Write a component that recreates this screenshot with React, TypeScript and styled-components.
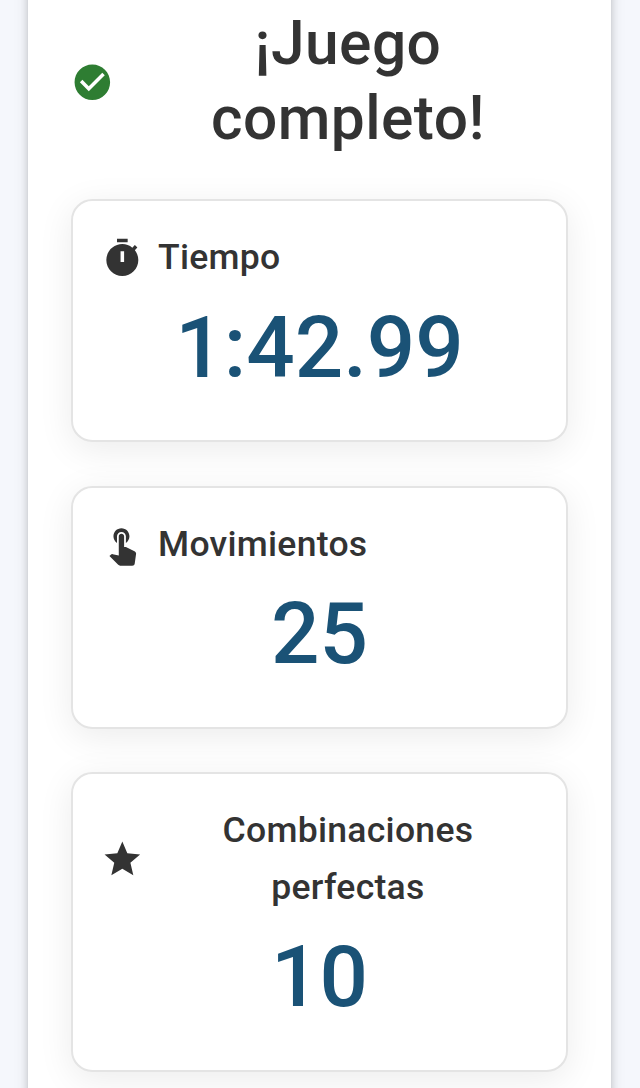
import React from "react";
import styled, { createGlobalStyle } from "styled-components";

const GlobalStyle = createGlobalStyle`
  * { box-sizing: border-box; }
  body {
    margin: 0;
    height: 1088px;
    overflow: hidden;
    background: #f5f7fc;
    font-family: Roboto, "Liberation Sans", sans-serif;
    color: #333;
  }
`;

const Page = styled.main`
  display: flow-root;
  height: 1088px;
  padding: 0 29px 0 28px;
  overflow: hidden;
`;

const Panel = styled.section`
  height: 1240px;
  margin-top: -43px;
  padding: 50.4px 43px 0;
  background: #fff;
  box-shadow: 0 5.3px 5.3px -3.6px rgba(0, 0, 0, 0.2),
    0 5.3px 7.1px 0 rgba(0, 0, 0, 0.14), 0 1.8px 14.2px 0 rgba(0, 0, 0, 0.12);
`;

const Header = styled.header`
  display: flex;
  align-items: center;
  gap: 14.2px;
  margin-bottom: 42.9px;
`;

const Title = styled.h1`
  flex: 1;
  margin: 0;
  font-size: 60.44px;
  font-weight: 500;
  line-height: 74.6px;
  letter-spacing: 0.00735em;
  text-align: center;
`;

const Icon = styled.svg<{ $color?: string }>`
  flex: none;
  width: 42.67px;
  height: 42.67px;
  fill: ${(p) => p.$color ?? "#333"};
`;

const Cards = styled.div`
  display: flex;
  flex-direction: column;
  gap: 43.7px;
`;

const Card = styled.article`
  padding: 28px 28.2px 41.8px;
  background: #fff;
  border: 2px solid #e4e4e4;
  border-radius: 21.33px;
  box-shadow: 0 7.1px 35.6px rgba(0, 0, 0, 0.08);
`;

const CardHead = styled.div`
  display: flex;
  align-items: center;
  gap: 14.2px;
  margin-bottom: 12.4px;
`;

const Label = styled.h2<{ $fill?: boolean }>`
  flex: ${(p) => (p.$fill ? 1 : "none")};
  margin: 0;
  font-size: 35.56px;
  font-weight: 500;
  line-height: 56.9px;
  letter-spacing: 0.0075em;
  text-align: center;
`;

const Value = styled.p`
  margin: 0;
  font-size: 85.33px;
  font-weight: 500;
  line-height: 99.6px;
  text-align: center;
  color: #1a5276;
`;

const CHECK =
  "M12 2C6.48 2 2 6.48 2 12s4.48 10 10 10 10-4.48 10-10S17.52 2 12 2zm-2 15-5-5 1.41-1.41L10 14.17l7.59-7.59L19 8l-9 9z";

const stats = [
  {
    label: "Tiempo",
    value: "1:42.99",
    icon: "M9 1h6v2H9zm10.03 6.39 1.42-1.42c-.43-.51-.9-.99-1.41-1.41l-1.42 1.42C16.07 4.74 14.12 4 12 4c-4.97 0-9 4.03-9 9s4.02 9 9 9 9-4.03 9-9c0-2.12-.74-4.07-1.97-5.61zM13 14h-2V8h2v6z",
  },
  {
    label: "Movimientos",
    value: "25",
    icon: "M9 11.24V7.5C9 6.12 10.12 5 11.5 5S14 6.12 14 7.5v3.74c1.21-.81 2-2.18 2-3.74C16 5.01 13.99 3 11.5 3S7 5.01 7 7.5c0 1.56.79 2.93 2 3.74zm9.84 4.63-4.54-2.26c-.17-.07-.35-.11-.54-.11H13v-6c0-.83-.67-1.5-1.5-1.5S10 6.67 10 7.5v10.74l-3.43-.72c-.08-.01-.15-.03-.24-.03-.31 0-.59.13-.79.33l-.79.8 4.94 4.94c.27.27.65.44 1.06.44h6.79c.75 0 1.33-.55 1.44-1.28l.75-5.27c.01-.07.02-.14.02-.2 0-.62-.38-1.16-.91-1.38z",
  },
  {
    label: "Combinaciones perfectas",
    value: "10",
    fill: true,
    icon: "M12 17.27 18.18 21l-1.64-7.03L22 9.24l-7.19-.61L12 2 9.19 8.63 2 9.24l5.46 4.73L5.82 21z",
  },
];

export default function App() {
  return (
    <>
      <GlobalStyle />
      <Page>
        <Panel>
          <Header>
            <Icon viewBox="0 0 24 24" $color="#2e7d32">
              <path d={CHECK} />
            </Icon>
            <Title>¡Juego completo!</Title>
          </Header>
          <Cards>
            {stats.map((s) => (
              <Card key={s.label}>
                <CardHead>
                  <Icon viewBox="0 0 24 24">
                    <path d={s.icon} />
                  </Icon>
                  <Label $fill={s.fill}>{s.label}</Label>
                </CardHead>
                <Value>{s.value}</Value>
              </Card>
            ))}
          </Cards>
        </Panel>
      </Page>
    </>
  );
}
